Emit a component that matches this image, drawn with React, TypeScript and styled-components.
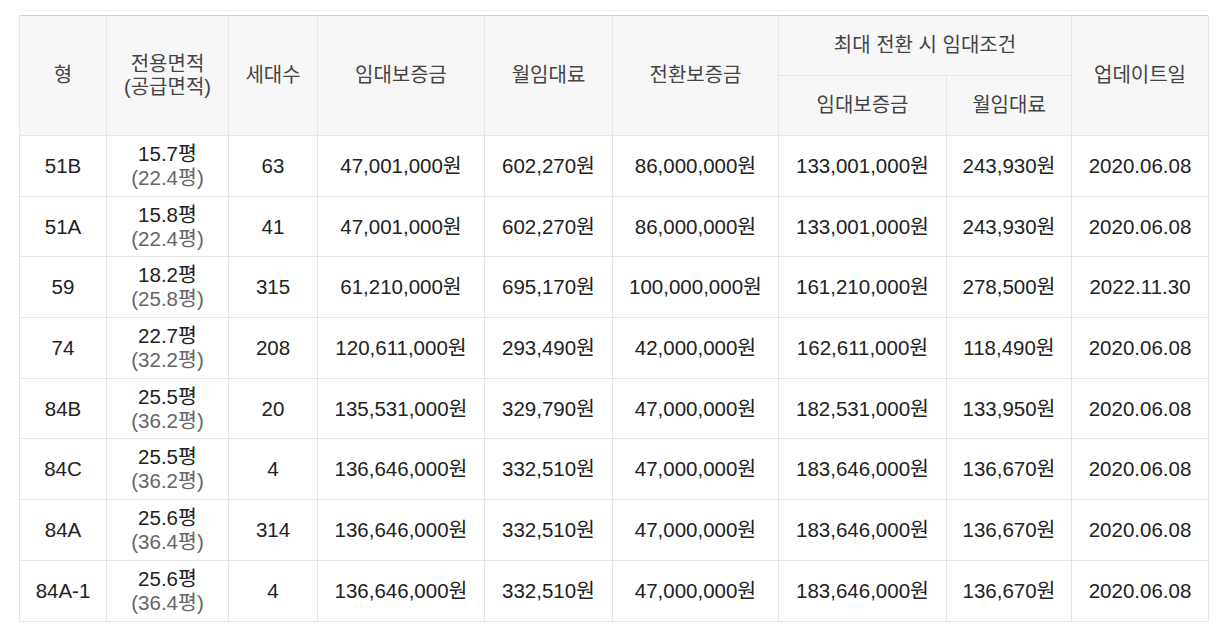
import React from "react";
import styled, { createGlobalStyle } from "styled-components";

const Global = createGlobalStyle`
  html, body { margin: 0; padding: 0; background: #fff; }
  body { font-family: "Liberation Sans", "Noto Sans CJK KR", sans-serif; }
`;

const Page = styled.div`
  padding: 10px 20px 0 19px;
`;

const TopRule = styled.div`
  width: 1189px;
  height: 1px;
  background: #f2f2f2;
  margin-bottom: 4px;
`;

const Table = styled.table`
  width: 1189px;
  border-collapse: collapse;
  table-layout: fixed;
  border-top: 1px solid #cfcfcf;
`;

const Th = styled.th`
  background: #f7f7f7;
  color: #444;
  font-weight: normal;
  font-size: 20px;
  line-height: 23px;
  border: 1px solid #e6e6e6;
  border-top: none;
  height: 59px;
  padding: 0;
  text-align: center;
  vertical-align: middle;
`;

const Td = styled.td`
  color: #222;
  font-size: 20.5px;
  line-height: 24px;
  border: 1px solid #e6e6e6;
  height: 59.7px;
  padding: 0;
  text-align: center;
  vertical-align: middle;
  white-space: nowrap;
`;

const Sub = styled.div`
  color: #666;
`;

const widths = [87, 122, 89, 167, 128, 166, 168, 125, 137];

const rows = [
  ["51B", "15.7평", "22.4평", "63", "47,001,000원", "602,270원", "86,000,000원", "133,001,000원", "243,930원", "2020.06.08"],
  ["51A", "15.8평", "22.4평", "41", "47,001,000원", "602,270원", "86,000,000원", "133,001,000원", "243,930원", "2020.06.08"],
  ["59", "18.2평", "25.8평", "315", "61,210,000원", "695,170원", "100,000,000원", "161,210,000원", "278,500원", "2022.11.30"],
  ["74", "22.7평", "32.2평", "208", "120,611,000원", "293,490원", "42,000,000원", "162,611,000원", "118,490원", "2020.06.08"],
  ["84B", "25.5평", "36.2평", "20", "135,531,000원", "329,790원", "47,000,000원", "182,531,000원", "133,950원", "2020.06.08"],
  ["84C", "25.5평", "36.2평", "4", "136,646,000원", "332,510원", "47,000,000원", "183,646,000원", "136,670원", "2020.06.08"],
  ["84A", "25.6평", "36.4평", "314", "136,646,000원", "332,510원", "47,000,000원", "183,646,000원", "136,670원", "2020.06.08"],
  ["84A-1", "25.6평", "36.4평", "4", "136,646,000원", "332,510원", "47,000,000원", "183,646,000원", "136,670원", "2020.06.08"],
];

export default function App() {
  return (
    <Page>
      <Global />
      <TopRule />
      <Table>
        <colgroup>
          {widths.map((w, i) => (
            <col key={i} style={{ width: w }} />
          ))}
        </colgroup>
        <thead>
          <tr>
            <Th rowSpan={2}>형</Th>
            <Th rowSpan={2}>
              전용면적
              <br />
              (공급면적)
            </Th>
            <Th rowSpan={2}>세대수</Th>
            <Th rowSpan={2}>임대보증금</Th>
            <Th rowSpan={2}>월임대료</Th>
            <Th rowSpan={2}>전환보증금</Th>
            <Th colSpan={2}>최대 전환 시 임대조건</Th>
            <Th rowSpan={2}>업데이트일</Th>
          </tr>
          <tr>
            <Th>임대보증금</Th>
            <Th>월임대료</Th>
          </tr>
        </thead>
        <tbody>
          {rows.map((r) => (
            <tr key={r[0]}>
              <Td>{r[0]}</Td>
              <Td>
                <div>{r[1]}</div>
                <Sub>({r[2]})</Sub>
              </Td>
              {r.slice(3).map((c, i) => (
                <Td key={i}>{c}</Td>
              ))}
            </tr>
          ))}
        </tbody>
      </Table>
    </Page>
  );
}
